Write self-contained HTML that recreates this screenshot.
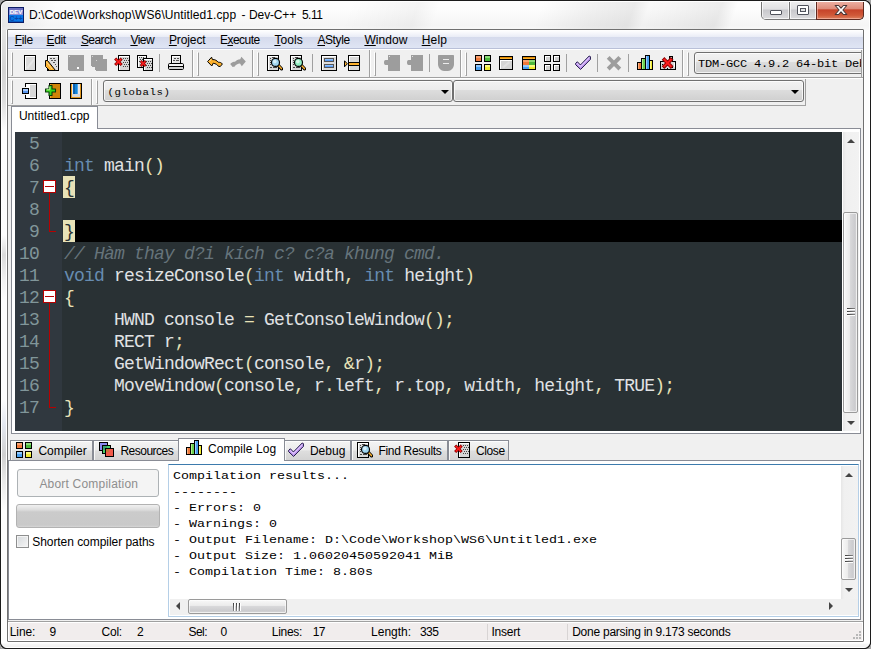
<!DOCTYPE html>
<html><head><meta charset="utf-8"><title>Dev-C++ 5.11</title>
<style>*{box-sizing:border-box}
html,body{margin:0;padding:0}
body{width:871px;height:649px;overflow:hidden;background:#a4a4a4;font-family:"Liberation Sans",sans-serif;font-size:12px;color:#000;position:relative}
.a{position:absolute}
svg{display:block}
.win{left:0;top:0;width:871px;height:649px;border-radius:6px;background:#f4f4f4;overflow:hidden}
.winborder{left:0;top:0;width:871px;height:649px;pointer-events:none}
.titlebg{left:0;top:0;width:871px;height:30px;background:linear-gradient(115deg,rgba(0,0,0,.09) 0,rgba(0,0,0,.04) 25px,transparent 55px),linear-gradient(110deg,transparent 510px,rgba(0,0,0,.05) 560px,rgba(0,0,0,.08) 598px,rgba(0,0,0,.02) 612px,rgba(0,0,0,.03) 630px,rgba(0,0,0,.07) 680px,transparent 695px),linear-gradient(110deg,transparent 330px,rgba(0,0,0,.04) 395px,transparent 415px),linear-gradient(#fff 0,#fdfdfd 30%,#f5f5f5 85%,#f9f9f9 100%)}
.fl{left:0;top:30px;width:8px;height:619px;background:linear-gradient(90deg,#fff 0,#fff 2px,transparent 2px,transparent 6px,#fff 6px),linear-gradient(#e4e4e4 0,#d4d4d4 40px,#dedede 70px,#fcfcfc 100px,#fdfdfd 205px,#dcdcdc 225px,#f2f2f2 250px,#fdfdfd 270px,#fdfdfd 370px,#e4e8f0 395px,#d0d0d0 425px,#e8e8e8 450px,#fdfdfd 480px,#fdfdfd 100%)}
.fr{left:863px;top:30px;width:8px;height:619px;background:linear-gradient(90deg,#fff 0,#fff 2px,transparent 2px,transparent 6px,#fff 6px),linear-gradient(#fdfdfd 0,#fdfdfd 100%)}
.fb{left:0;top:641px;width:871px;height:8px;background:linear-gradient(#fff 0,#fff 2px,#f6f6f6 3px,#f0f0f0 6px,#fff 6px)}
.ui{font-family:"Liberation Sans",sans-serif;font-size:12px;line-height:14px;white-space:pre;color:#000}
.title{text-shadow:0 0 6px #fff}
.mono{font-family:"Liberation Mono",monospace;white-space:pre}
.capbtns{left:761px;top:0;width:103px;height:20px;border:1px solid #767676;border-top:none;border-radius:0 0 5px 5px;overflow:hidden;background:#ddd}
.cb{top:0;height:19px;border-right:1px solid #767676;background:linear-gradient(#f2f2f2 0,#e0e0e2 48%,#c8c8cc 52%,#dcdcde 100%);box-shadow:inset 0 0 0 1px rgba(255,255,255,.7)}
.cmin{left:0;width:28px}
.cmin i{position:absolute;left:8px;top:10px;width:12px;height:5px;border:1px solid #50535c;background:#fff;border-radius:1px}
.cmax{left:28px;width:27px}
.cmax i{position:absolute;left:7px;top:5px;width:12px;height:10px;border:1px solid #50535c;background:#fff;border-radius:1px}
.cmax i:after{content:"";position:absolute;left:2px;top:2px;width:6px;height:4px;box-sizing:border-box;border:1px solid #50535c;background:#e4e4e4}
.cclose{left:55px;width:47px;border-right:none;background:linear-gradient(#f0b8ac 0,#de8c7a 46%,#c6432a 52%,#d05838 80%,#de8260 100%);box-shadow:inset 0 0 0 1px rgba(255,200,190,.55)}
.cclose svg{position:absolute;left:17px;top:4px}
.client{left:8px;top:30px;width:855px;height:611px;background:#f0f0f0}
.menubar{left:8px;top:30px;width:855px;height:19px;background:linear-gradient(#ffffff 0,#fdfdfe 1px,#e9ecf6 7px,#d5daec 7px,#dfe5f4 18px,#b9c0d8 18px,#b9c0d8 19px)}
.mi{top:33px;height:14px}
.mi u{text-decoration:underline;text-underline-offset:1px}
.grip{width:2px;border-top:1px solid #fff;border-left:1px solid #fff;border-right:1px solid #a0a0a0;border-bottom:1px solid #a0a0a0}
.vsep{width:1px;background:#a0a0a0}
.bandend{width:2px;border-left:1px solid #a0a0a0;border-right:1px solid #fff}
.combo{border:1px solid #707070;border-radius:3px;background:linear-gradient(#f2f2f2 0,#ebebeb 45%,#dddddd 46%,#cfcfcf 100%);box-shadow:inset 0 0 0 1px rgba(255,255,255,.75)}
.cbtxt{font-size:12px;line-height:14px;letter-spacing:-0.2px;color:#000;transform:scaleY(0.87);transform-origin:0 11px}
.arrow{width:0;height:0;border-left:4px solid transparent;border-right:4px solid transparent;border-top:4px solid #000}
.editor{left:15px;top:132px;width:827px;height:299px;background:#293134;overflow:hidden}
.gutter{left:0;top:0;width:47px;height:299px;background:#30383f}
.ln{left:0;width:24px;text-align:right;color:#81969a;height:22px;line-height:22px;font-size:18px;letter-spacing:-0.8px}
.cl{left:49px;height:22px;line-height:22px;font-size:18px;letter-spacing:-0.8px;color:#e0e2e4}
.k{color:#678cb1}.s{color:#e8e2b7}.c{color:#66747b;font-style:italic}.hb{color:#293134}
.tab{border:1px solid #898c95;border-bottom:none;background:linear-gradient(#f4f4f4 0,#ebebeb 9px,#dedede 10px,#d3d3d3 100%);height:20px;top:440px;box-shadow:inset 1px 1px 0 rgba(255,255,255,.8)}
.tabtxt{top:444px}
.sb{background:#f0f0f0}
.thumb{border:1px solid #9a9a9a;border-radius:2px;background:linear-gradient(90deg,#f8f8f8 0,#ececec 42%,#d8d8da 50%,#cbcbce 85%,#dedede 100%);box-shadow:inset 0 0 0 1px rgba(255,255,255,.6)}
.sbv{background:linear-gradient(90deg,#e6e6e6 0,#f0f0f0 3px,#f2f2f2 100%)}
.thumbh{border:1px solid #9a9a9a;border-radius:2px;background:linear-gradient(#f8f8f8 0,#ececec 42%,#d8d8da 50%,#cbcbce 85%,#dedede 100%);box-shadow:inset 0 0 0 1px rgba(255,255,255,.6)}
.gl{width:8px;height:8px;background:linear-gradient(90deg,rgba(60,60,60,1),rgba(120,120,120,.85)) 0 0/8px 1px no-repeat,linear-gradient(#fff,#fff) 0 1px/8px 1px no-repeat,linear-gradient(90deg,rgba(60,60,60,1),rgba(120,120,120,.85)) 0 3px/8px 1px no-repeat,linear-gradient(#fff,#fff) 0 4px/8px 1px no-repeat,linear-gradient(90deg,rgba(60,60,60,1),rgba(120,120,120,.85)) 0 6px/8px 1px no-repeat,linear-gradient(#fff,#fff) 0 7px/8px 1px no-repeat}
.glh{width:8px;height:8px;background:linear-gradient(rgba(60,60,60,1),rgba(120,120,120,.85)) 0 0/1px 8px no-repeat,linear-gradient(#fff,#fff) 1px 0/1px 8px no-repeat,linear-gradient(rgba(60,60,60,1),rgba(120,120,120,.85)) 3px 0/1px 8px no-repeat,linear-gradient(#fff,#fff) 4px 0/1px 8px no-repeat,linear-gradient(rgba(60,60,60,1),rgba(120,120,120,.85)) 6px 0/1px 8px no-repeat,linear-gradient(#fff,#fff) 7px 0/1px 8px no-repeat}
.au{width:0;height:0;border-left:4px solid transparent;border-right:4px solid transparent;border-bottom:4px solid #444}
.ad{width:0;height:0;border-left:4px solid transparent;border-right:4px solid transparent;border-top:4px solid #444}
.al{width:0;height:0;border-top:4px solid transparent;border-bottom:4px solid transparent;border-right:4px solid #444}
.ar{width:0;height:0;border-top:4px solid transparent;border-bottom:4px solid transparent;border-left:4px solid #444}
.log{font-size:13.33px;line-height:16px;color:#000;left:173px;transform:scaleY(0.87);transform-origin:0 12px}
.chk{width:13px;height:13px;border:1px solid #8e8f8f;background:linear-gradient(135deg,#d5d9dc,#f6f6f6);box-shadow:inset 0 0 0 1px #f4f4f4}
.st{top:625px;height:14px}
.szgrip{width:9px;height:9px;background:
 linear-gradient(#b8b8b8,#b8b8b8) 6px 0/2px 2px no-repeat,
 linear-gradient(#b8b8b8,#b8b8b8) 3px 3px/2px 2px no-repeat,
 linear-gradient(#b8b8b8,#b8b8b8) 6px 3px/2px 2px no-repeat,
 linear-gradient(#b8b8b8,#b8b8b8) 0 6px/2px 2px no-repeat,
 linear-gradient(#b8b8b8,#b8b8b8) 3px 6px/2px 2px no-repeat,
 linear-gradient(#b8b8b8,#b8b8b8) 6px 6px/2px 2px no-repeat}
</style></head>
<body>
<div class="a win">
<div class="a titlebg"></div>
<div class="a fl"></div><div class="a fr"></div><div class="a fb"></div>
<div class="a" style="left:8px;top:7px;width:16px;height:16px"><svg width="16" height="16" viewBox="0 0 16 16" shape-rendering="crispEdges"><rect x="0" y="0" width="16" height="16" fill="#0c1c66"/><rect x="1" y="1" width="14" height="7" fill="#8d8fd6"/><rect x="1" y="1" width="14" height="2" fill="#6d6fc0"/><rect x="1" y="8" width="14" height="7" fill="#0a78e8"/><rect x="1" y="14" width="14" height="1" fill="#0a5cc0"/><text x="8" y="7.3" font-family="Liberation Sans, sans-serif" font-weight="bold" font-size="6.2" fill="#fff" text-anchor="middle" shape-rendering="auto">DEV</text><text x="8" y="13.6" font-family="Liberation Sans, sans-serif" font-weight="bold" font-size="7" fill="#0b48a8" text-anchor="middle" shape-rendering="auto">C++</text></svg></div>
<div class="a ui title" style="left:0;top:8px;width:400px;height:14px"><span class="a" style="left:28.9px;top:0;letter-spacing:0.1px;">D:\Code\Workshop\WS6\Untitled1.cpp </span><span class="a" style="left:241.5px;top:0;letter-spacing:0.0px;">- </span><span class="a" style="left:249.1px;top:0;letter-spacing:-0.15px;">Dev-C++ </span><span class="a" style="left:301.9px;top:0;letter-spacing:-0.5px;">5.11</span></div>
<div class="a capbtns"><div class="a cb cmin"><i></i></div><div class="a cb cmax"><i></i></div><div class="a cb cclose"><svg width="14" height="12" viewBox="0 0 14 12"><path d="M1.2 1.5 L4.6 1.5 L7 4.2 L9.4 1.5 L12.8 1.5 L8.9 6 L12.8 10.5 L9.4 10.5 L7 7.8 L4.6 10.5 L1.2 10.5 L5.1 6 Z" fill="#fff" stroke="#4a3838" stroke-width="1.1" stroke-linejoin="round"/></svg></div></div>
<div class="a" style="left:816px;top:1px;width:48px;height:19px;border:1px solid #5e2a20;border-top:none;border-radius:0 0 5px 0;pointer-events:none"></div>
<div class="a client"></div>
<div class="a menubar"></div>
<div class="a ui mi" style="left:14.8px;top:33px;letter-spacing:-0.35px;"><u>F</u>ile</div><div class="a ui mi" style="left:46.5px;top:33px;letter-spacing:-0.35px;"><u>E</u>dit</div><div class="a ui mi" style="left:80.9px;top:33px;letter-spacing:-0.55px;"><u>S</u>earch</div><div class="a ui mi" style="left:130.4px;top:33px;letter-spacing:-0.5px;"><u>V</u>iew</div><div class="a ui mi" style="left:168.9px;top:33px;letter-spacing:-0.1px;"><u>P</u>roject</div><div class="a ui mi" style="left:219.9px;top:33px;letter-spacing:-0.5px;">E<u>x</u>ecute</div><div class="a ui mi" style="left:274.4px;top:33px;letter-spacing:0.1px;"><u>T</u>ools</div><div class="a ui mi" style="left:317.4px;top:33px;letter-spacing:-0.4px;"><u>A</u>Style</div><div class="a ui mi" style="left:364.4px;top:33px;letter-spacing:0.05px;"><u>W</u>indow</div><div class="a ui mi" style="left:421.7px;top:33px;letter-spacing:0.2px;"><u>H</u>elp</div>
<div class="a" style="left:8px;top:49px;width:855px;height:1px;background:#fff"></div><div class="a" style="left:8px;top:77px;width:855px;height:1px;background:#a0a0a0"></div><div class="a" style="left:8px;top:78px;width:855px;height:1px;background:#fff"></div><div class="a" style="left:8px;top:105px;width:797px;height:1px;background:#a0a0a0"></div><div class="a grip" style="left:11px;top:52px;height:24px"></div><div class="a grip" style="left:197px;top:52px;height:24px"></div><div class="a grip" style="left:257px;top:52px;height:24px"></div><div class="a grip" style="left:374px;top:52px;height:24px"></div><div class="a grip" style="left:465px;top:52px;height:24px"></div><div class="a grip" style="left:687px;top:52px;height:24px"></div><div class="a bandend" style="left:192px;top:50px;height:27px"></div><div class="a bandend" style="left:252px;top:50px;height:27px"></div><div class="a bandend" style="left:369px;top:50px;height:27px"></div><div class="a bandend" style="left:460px;top:50px;height:27px"></div><div class="a bandend" style="left:682px;top:50px;height:27px"></div><div class="a" style="left:22px;top:55px;width:16px;height:16px"><svg width="16" height="16" viewBox="0 0 16 16" shape-rendering="crispEdges"><rect x="2" y="0" width="12" height="16" fill="#000"/><rect x="3" y="1" width="10" height="14" fill="#fff"/><rect x="4" y="2" width="9" height="13" fill="#dadada"/><path d="M4 13 L12 3 L12 6 L6 14 Z" fill="#e6e6e6" shape-rendering="auto"/></svg></div><div class="a" style="left:45px;top:55px;width:16px;height:16px"><svg width="16" height="16" viewBox="0 0 16 16" shape-rendering="crispEdges"><rect x="2" y="0" width="12" height="16" fill="#000"/><rect x="3" y="1" width="10" height="14" fill="#fff"/><rect x="4" y="2" width="9" height="13" fill="#dedede"/><rect x="5" y="3" width="2" height="1" fill="#555"/><rect x="8" y="3" width="2" height="1" fill="#555"/><rect x="6" y="5" width="2" height="1" fill="#555"/><rect x="9" y="5" width="2" height="1" fill="#555"/><rect x="8" y="7" width="2" height="1" fill="#555"/><rect x="10" y="9" width="1" height="1" fill="#555"/><rect x="11" y="11" width="1" height="1" fill="#555"/><path d="M0.5 5.5 L2.5 5.5 L10.5 15.5 L4.5 15.5 L0.5 11.5 Z" fill="#fbb02d" stroke="#000" stroke-width="1" shape-rendering="auto"/><path d="M1.5 7 L7 14" stroke="#ffd98a" stroke-width="1" shape-rendering="auto"/></svg></div><div class="a" style="left:68px;top:55px;width:16px;height:16px"><svg width="16" height="16" viewBox="0 0 16 16" shape-rendering="crispEdges"><path d="M0 0 H16 V16 H1 L0 15 Z" fill="#9d9d9d"/><rect x="9" y="12" width="2" height="2" fill="#fff"/><rect x="1" y="1" width="1" height="1" fill="#d4d4d4"/></svg></div><div class="a" style="left:91px;top:55px;width:16px;height:16px"><svg width="16" height="16" viewBox="0 0 16 16" shape-rendering="crispEdges"><path d="M0 0 H12 V4 H16 V16 H5 L4 15 V12 H1 L0 11 Z" fill="#9d9d9d"/><rect x="1" y="1" width="1" height="1" fill="#d4d4d4"/><rect x="5" y="5" width="1" height="1" fill="#d4d4d4"/></svg></div><div class="a" style="left:114px;top:55px;width:16px;height:16px"><svg width="16" height="16" viewBox="0 0 16 16" shape-rendering="crispEdges"><rect x="4" y="0" width="12" height="16" fill="#000"/><rect x="5" y="1" width="10" height="14" fill="#fff"/><rect x="6" y="2" width="9" height="13" fill="#d6d6d6"/><rect x="9" y="3" width="1" height="1" fill="#444"/><rect x="11" y="3" width="1" height="1" fill="#444"/><rect x="13" y="3" width="1" height="1" fill="#444"/><rect x="10" y="5" width="1" height="1" fill="#444"/><rect x="12" y="5" width="1" height="1" fill="#444"/><rect x="14" y="5" width="1" height="1" fill="#444"/><rect x="9" y="7" width="1" height="1" fill="#444"/><rect x="11" y="7" width="1" height="1" fill="#444"/><rect x="13" y="7" width="1" height="1" fill="#444"/><rect x="10" y="9" width="1" height="1" fill="#444"/><rect x="12" y="9" width="1" height="1" fill="#444"/><rect x="14" y="9" width="1" height="1" fill="#444"/><rect x="9" y="11" width="1" height="1" fill="#444"/><rect x="11" y="11" width="1" height="1" fill="#444"/><rect x="13" y="11" width="1" height="1" fill="#444"/><g shape-rendering="auto" stroke-linecap="square"><path d="M2.2 4.6L6.6000000000000005 9.0M6.6000000000000005 4.6L2.2 9.0" stroke="#8c0000" stroke-width="3.0"/><path d="M2.2 4.6L6.6000000000000005 9.0M6.6000000000000005 4.6L2.2 9.0" stroke="#ff1c1c" stroke-width="1.5"/></g></svg></div><div class="a" style="left:137px;top:55px;width:16px;height:16px"><svg width="16" height="16" viewBox="0 0 16 16" shape-rendering="crispEdges"><rect x="0" y="0" width="10" height="13" fill="#000"/><rect x="1" y="1" width="8" height="11" fill="#fff"/><rect x="2" y="2" width="7" height="10" fill="#d6d6d6"/><rect x="2" y="2" width="1" height="1" fill="#444"/><rect x="4" y="2" width="1" height="1" fill="#444"/><rect x="6" y="2" width="1" height="1" fill="#444"/><rect x="3" y="4" width="1" height="1" fill="#444"/><rect x="5" y="4" width="1" height="1" fill="#444"/><rect x="7" y="4" width="1" height="1" fill="#444"/><rect x="2" y="6" width="1" height="1" fill="#444"/><rect x="4" y="6" width="1" height="1" fill="#444"/><rect x="6" y="6" width="1" height="1" fill="#444"/><rect x="6" y="3" width="10" height="13" fill="#000"/><rect x="7" y="4" width="8" height="11" fill="#fff"/><rect x="8" y="5" width="7" height="10" fill="#d6d6d6"/><rect x="9" y="6" width="1" height="1" fill="#444"/><rect x="11" y="6" width="1" height="1" fill="#444"/><rect x="13" y="6" width="1" height="1" fill="#444"/><rect x="10" y="8" width="1" height="1" fill="#444"/><rect x="12" y="8" width="1" height="1" fill="#444"/><rect x="14" y="8" width="1" height="1" fill="#444"/><rect x="9" y="10" width="1" height="1" fill="#444"/><rect x="11" y="10" width="1" height="1" fill="#444"/><rect x="13" y="10" width="1" height="1" fill="#444"/><rect x="10" y="12" width="1" height="1" fill="#444"/><rect x="12" y="12" width="1" height="1" fill="#444"/><rect x="14" y="12" width="1" height="1" fill="#444"/><g shape-rendering="auto" stroke-linecap="square"><path d="M4.6 6.9L7.800000000000001 10.1M7.800000000000001 6.9L4.6 10.1" stroke="#8c0000" stroke-width="2.6"/><path d="M4.6 6.9L7.800000000000001 10.1M7.800000000000001 6.9L4.6 10.1" stroke="#ff1c1c" stroke-width="1.3"/></g></svg></div><div class="a" style="left:168px;top:55px;width:16px;height:16px"><svg width="16" height="16" viewBox="0 0 16 16" shape-rendering="crispEdges"><rect x="3" y="0" width="10" height="9" fill="#000"/><rect x="4" y="1" width="8" height="7" fill="#fff"/><rect x="5" y="2" width="7" height="6" fill="#e4e4e4"/><rect x="6" y="3" width="2" height="1" fill="#555"/><rect x="9" y="3" width="2" height="1" fill="#555"/><rect x="5" y="5" width="2" height="1" fill="#555"/><rect x="8" y="5" width="3" height="1" fill="#555"/><rect x="0.5" y="8.5" width="15" height="6" rx="1.2" fill="#f4f4f4" stroke="#000" shape-rendering="auto"/><rect x="1" y="11" width="14" height="1" fill="#000"/><rect x="1" y="12" width="14" height="2" fill="#d0d0d0"/></svg></div><div class="a" style="left:207px;top:55px;width:16px;height:16px"><svg width="16" height="16" viewBox="0 0 16 16"><path d="M0.6 6.6 L4.6 2.2 L5.4 4.6 C8 4.2 10 5.8 11.2 7.2 C12.6 7.2 14.6 7.6 15.4 9 L13.2 11.6 L11.2 11.2 C10.6 9.8 8.6 8.6 6.2 8.2 L4.8 11 Z" fill="#fbb02d" stroke="#000" stroke-width="1" stroke-linejoin="round"/><path d="M2.4 6.4 L4.4 4.2" stroke="#ffe0a0" stroke-width="1"/></svg></div><div class="a" style="left:230px;top:55px;width:16px;height:16px"><svg width="16" height="16" viewBox="0 0 16 16"><path d="M15.8 6.4 L11.4 1.8 L10.2 4.2 C8 4.2 6.4 5.2 5 6.8 C3.4 6.8 1.4 7.4 0.2 9 L2.6 12 L4.8 11.4 C5.6 10 7.6 8.8 10 8.6 L11.8 11.2 Z" fill="#9d9d9d"/></svg></div><div class="a" style="left:267px;top:55px;width:16px;height:16px"><svg width="16" height="16" viewBox="0 0 16 16" shape-rendering="crispEdges"><rect x="0" y="0" width="12" height="16" fill="#000"/><rect x="1" y="1" width="10" height="14" fill="#fff"/><rect x="2" y="2" width="9" height="13" fill="#d8d8d8"/><rect x="3" y="3" width="1" height="1" fill="#444"/><rect x="3" y="5" width="1" height="1" fill="#444"/><rect x="3" y="7" width="1" height="1" fill="#444"/><rect x="3" y="9" width="1" height="1" fill="#444"/><rect x="3" y="12" width="2" height="1" fill="#444"/><rect x="6" y="12" width="4" height="1" fill="#444"/><rect x="5" y="2" width="3" height="1" fill="#444"/><g shape-rendering="auto"><path d="M11.3 10.3 L14.6 13.8" stroke="#000" stroke-width="3.2" stroke-linecap="round"/><path d="M11.6 10.6 L14.4 13.6" stroke="#fbb02d" stroke-width="1.5" stroke-linecap="round"/><circle cx="8.5" cy="7.4" r="4" fill="#9fd4ee" stroke="#000" stroke-width="1.2"/><circle cx="7.8" cy="6.6" r="1.8" fill="#d8f0fa"/></g></svg></div><div class="a" style="left:290px;top:55px;width:16px;height:16px"><svg width="16" height="16" viewBox="0 0 16 16" shape-rendering="crispEdges"><rect x="0" y="0" width="12" height="16" fill="#000"/><rect x="1" y="1" width="10" height="14" fill="#fff"/><rect x="2" y="2" width="9" height="13" fill="#d8d8d8"/><rect x="3" y="3" width="1" height="1" fill="#444"/><rect x="3" y="5" width="1" height="1" fill="#444"/><rect x="3" y="7" width="1" height="1" fill="#444"/><rect x="3" y="9" width="1" height="1" fill="#444"/><rect x="3" y="12" width="2" height="1" fill="#444"/><rect x="6" y="12" width="4" height="1" fill="#444"/><rect x="5" y="2" width="3" height="1" fill="#444"/><g shape-rendering="auto"><path d="M11.3 10.3 L14.6 13.8" stroke="#000" stroke-width="3.2" stroke-linecap="round"/><path d="M11.6 10.6 L14.4 13.6" stroke="#fbb02d" stroke-width="1.5" stroke-linecap="round"/><circle cx="8.5" cy="7.4" r="4" fill="#90ecc0" stroke="#000" stroke-width="1.2"/><circle cx="7.8" cy="6.6" r="1.8" fill="#d4f8e6"/></g></svg></div><div class="a" style="left:321px;top:55px;width:16px;height:16px"><svg width="16" height="16" viewBox="0 0 16 16" shape-rendering="crispEdges"><rect x="0" y="0" width="16" height="16" fill="#000"/><rect x="1" y="1" width="14" height="14" fill="#fff"/><rect x="2" y="2" width="13" height="13" fill="#dcdcdc"/><rect x="3" y="3" width="10" height="4" fill="#555"/><rect x="4" y="4" width="8" height="2" fill="#5a9cf4"/><rect x="4" y="4" width="8" height="1" fill="#8cc0ff"/><rect x="3" y="9" width="10" height="4" fill="#555"/><rect x="4" y="10" width="8" height="2" fill="#5a9cf4"/><rect x="4" y="10" width="8" height="1" fill="#8cc0ff"/></svg></div><div class="a" style="left:344px;top:55px;width:16px;height:16px"><svg width="16" height="16" viewBox="0 0 16 16" shape-rendering="crispEdges"><rect x="4" y="0" width="12" height="16" fill="#000"/><rect x="5" y="1" width="10" height="14" fill="#fff"/><rect x="6" y="2" width="9" height="13" fill="#d8d8d8"/><rect x="5" y="7" width="10" height="4" fill="#000"/><rect x="5" y="8" width="10" height="2" fill="#fbb02d"/><path d="M0.5 5.8 L3.4 8.8 L0.5 11.8 Z" fill="#fbb02d" stroke="#000" stroke-width="1" shape-rendering="auto"/></svg></div><div class="a" style="left:384px;top:55px;width:16px;height:16px"><svg width="16" height="16" viewBox="0 0 16 16" shape-rendering="crispEdges"><path d="M4 0 H16 V16 H4 V10 H1.5 C0.5 10 0 9 0 7.5 C0 6 0.5 5 1.5 5 H4 Z" fill="#9d9d9d" shape-rendering="auto"/><rect x="5" y="1" width="1" height="1" fill="#e0e0e0"/></svg></div><div class="a" style="left:407px;top:55px;width:16px;height:16px"><svg width="16" height="16" viewBox="0 0 16 16" shape-rendering="crispEdges"><path d="M4 0 H16 V16 H4 V10 H1.5 C0.5 10 0 9 0 7.5 C0 6 0.5 5 1.5 5 H4 Z" fill="#9d9d9d" shape-rendering="auto"/><rect x="5" y="1" width="1" height="1" fill="#e0e0e0"/></svg></div><div class="a" style="left:438px;top:55px;width:16px;height:16px"><svg width="16" height="16" viewBox="0 0 16 16" shape-rendering="crispEdges"><path d="M0 1 C0 0.4 0.4 0 1 0 H15 C15.6 0 16 0.4 16 1 V9 C16 13 13 16 10 16 H6 C3 16 0 13 0 9 Z" fill="#9d9d9d" shape-rendering="auto"/><rect x="5" y="4" width="6" height="1" fill="#ececec"/><rect x="5" y="8" width="6" height="1" fill="#ececec"/></svg></div><div class="a" style="left:475px;top:55px;width:16px;height:16px"><svg width="16" height="16" viewBox="0 0 16 16" shape-rendering="crispEdges"><rect x="0" y="0" width="7" height="7" fill="#000"/><rect x="1" y="1" width="5" height="5" fill="#f0793a"/><rect x="1" y="1" width="5" height="2" fill="#f8a070"/><rect x="9" y="0" width="7" height="7" fill="#000"/><rect x="10" y="1" width="5" height="5" fill="#4cb83c"/><rect x="10" y="1" width="5" height="2" fill="#8cdc78"/><rect x="0" y="9" width="7" height="7" fill="#000"/><rect x="1" y="10" width="5" height="5" fill="#4aa0f0"/><rect x="1" y="10" width="5" height="2" fill="#90c8ff"/><rect x="9" y="9" width="7" height="7" fill="#000"/><rect x="10" y="10" width="5" height="5" fill="#f0ea30"/><rect x="10" y="10" width="5" height="2" fill="#fafa80"/></svg></div><div class="a" style="left:498px;top:55px;width:16px;height:16px"><svg width="16" height="16" viewBox="0 0 16 16" shape-rendering="crispEdges"><rect x="1" y="1" width="14" height="14" fill="#000"/><rect x="2" y="2" width="12" height="2" fill="#fbb02d"/><rect x="2" y="2" width="12" height="1" fill="#e08a00"/><rect x="2" y="5" width="12" height="9" fill="#fff"/><rect x="3" y="6" width="11" height="8" fill="#d4d4d4"/><path d="M4 12 L11 6 L12 8 L6 13 Z" fill="#e0e0e0" shape-rendering="auto"/></svg></div><div class="a" style="left:521px;top:55px;width:16px;height:16px"><svg width="16" height="16" viewBox="0 0 16 16" shape-rendering="crispEdges"><rect x="1" y="1" width="14" height="14" fill="#000"/><rect x="2" y="2" width="12" height="2" fill="#fbb02d"/><rect x="2" y="2" width="12" height="1" fill="#e08a00"/><rect x="2" y="5" width="6" height="5" fill="#f0793a"/><rect x="2" y="5" width="6" height="2" fill="#f8a070"/><rect x="8" y="5" width="6" height="5" fill="#4cb83c"/><rect x="8" y="5" width="6" height="2" fill="#8cdc78"/><rect x="2" y="10" width="6" height="4" fill="#4aa0f0"/><rect x="2" y="10" width="6" height="2" fill="#90c8ff"/><rect x="8" y="10" width="6" height="4" fill="#f0ea30"/><rect x="8" y="10" width="6" height="2" fill="#fafa80"/></svg></div><div class="a" style="left:544px;top:55px;width:16px;height:16px"><svg width="16" height="16" viewBox="0 0 16 16" shape-rendering="crispEdges"><rect x="0" y="0" width="7" height="7" fill="#000"/><rect x="1" y="1" width="5" height="5" fill="#fff"/><rect x="2" y="2" width="4" height="4" fill="#d0d0d0"/><rect x="9" y="0" width="7" height="7" fill="#000"/><rect x="10" y="1" width="5" height="5" fill="#fff"/><rect x="11" y="2" width="4" height="4" fill="#d0d0d0"/><rect x="0" y="9" width="7" height="7" fill="#000"/><rect x="1" y="10" width="5" height="5" fill="#fff"/><rect x="2" y="11" width="4" height="4" fill="#d0d0d0"/><rect x="9" y="9" width="7" height="7" fill="#000"/><rect x="10" y="10" width="5" height="5" fill="#fff"/><rect x="11" y="11" width="4" height="4" fill="#d0d0d0"/></svg></div><div class="a" style="left:575px;top:55px;width:16px;height:16px"><svg width="16" height="16" viewBox="0 0 16 16"><path d="M0.6 8.4 L2.4 6.8 L5.4 10 L14.2 1 L15.4 1.6 L15.4 4.4 L5.6 14.4 L0.6 9.6 Z" fill="#c9a2f6" stroke="#1c1446" stroke-width="1" stroke-linejoin="round"/><path d="M2.4 8.2 L5.4 11.4 L14.4 2.4" stroke="#e6d2ff" stroke-width="1" fill="none"/></svg></div><div class="a" style="left:606px;top:55px;width:16px;height:16px"><svg width="16" height="16" viewBox="0 0 16 16"><path d="M3.6 3.8 L12.4 12.6 M12.4 3.8 L3.6 12.6" stroke="#9d9d9d" stroke-width="4" stroke-linecap="square"/></svg></div><div class="a" style="left:637px;top:55px;width:16px;height:16px"><svg width="16" height="16" viewBox="0 0 16 16" shape-rendering="crispEdges"><rect x="0" y="7" width="5" height="8" fill="#000"/><rect x="1" y="8" width="3" height="6" fill="#f0793a"/><rect x="1" y="8" width="1" height="6" fill="#f8b080"/><rect x="4" y="3" width="5" height="12" fill="#000"/><rect x="5" y="4" width="3" height="10" fill="#6cd050"/><rect x="5" y="4" width="1" height="10" fill="#b0f090"/><rect x="8" y="0" width="5" height="15" fill="#000"/><rect x="9" y="1" width="3" height="13" fill="#4aa0f0"/><rect x="9" y="1" width="1" height="13" fill="#a0d0ff"/><rect x="12" y="5" width="4" height="10" fill="#000"/><rect x="13" y="6" width="2" height="8" fill="#f0ea30"/><rect x="13" y="6" width="1" height="8" fill="#fafa90"/></svg></div><div class="a" style="left:660px;top:55px;width:16px;height:16px"><svg width="16" height="16" viewBox="0 0 16 16" shape-rendering="crispEdges"><rect x="0" y="6" width="16" height="9" fill="#000"/><rect x="1" y="7" width="14" height="7" fill="#d8d8d8"/><rect x="9" y="1" width="4" height="6" fill="#000"/><rect x="10" y="2" width="2" height="5" fill="#d8d8d8"/><rect x="2" y="9" width="1" height="1" fill="#000"/><rect x="4" y="12" width="1" height="1" fill="#000"/><rect x="7" y="13" width="1" height="1" fill="#000"/><rect x="12" y="12" width="1" height="1" fill="#000"/><rect x="14" y="8" width="1" height="4" fill="#fff"/><g shape-rendering="auto" stroke-linecap="square"><path d="M4.3999999999999995 4.8L10.8 11.2M10.8 4.8L4.3999999999999995 11.2" stroke="#8c0000" stroke-width="3.8"/><path d="M4.3999999999999995 4.8L10.8 11.2M10.8 4.8L4.3999999999999995 11.2" stroke="#ff1c1c" stroke-width="2.0"/></g></svg></div><div class="a vsep" style="left:159px;top:54px;height:18px"></div><div class="a vsep" style="left:312px;top:54px;height:18px"></div><div class="a vsep" style="left:429px;top:54px;height:18px"></div><div class="a vsep" style="left:566px;top:54px;height:18px"></div><div class="a vsep" style="left:597px;top:54px;height:18px"></div><div class="a vsep" style="left:628px;top:54px;height:18px"></div>
<div class="a" style="left:694px;top:50px;width:167px;height:27px;overflow:hidden"><div class="a combo" style="left:0;top:2px;width:180px;height:22px"></div></div><div class="a mono cbtxt" style="left:698px;top:57px;width:163px;overflow:hidden">TDM-GCC 4.9.2 64-bit Debug</div><div class="a" style="left:861px;top:50px;width:1px;height:27px;background:#a0a0a0"></div><div class="a" style="left:862px;top:50px;width:1px;height:27px;background:#f0f0f0"></div>
<div class="a grip" style="left:11px;top:80px;height:24px"></div><div class="a grip" style="left:96px;top:80px;height:24px"></div><div class="a bandend" style="left:91px;top:79px;height:26px"></div><div class="a" style="left:22px;top:83px;width:16px;height:16px"><svg width="16" height="16" viewBox="0 0 16 16" shape-rendering="crispEdges"><path d="M3 0 H15 V16 H3 V12 H6 V4 H3 Z" fill="#000"/><rect x="4" y="1" width="10" height="14" fill="#fff"/><rect x="8" y="2" width="6" height="12" fill="#d8d8d8"/><rect x="4" y="4" width="3" height="8" fill="#fff"/><rect x="3" y="4" width="1" height="8" fill="#f0f0f0"/><rect x="0" y="5" width="7" height="6" fill="#000"/><rect x="1" y="6" width="5" height="4" fill="#5a96ec"/><rect x="1" y="6" width="5" height="2" fill="#a8ccff"/></svg></div><div class="a" style="left:45px;top:83px;width:16px;height:16px"><svg width="16" height="16" viewBox="0 0 16 16" shape-rendering="crispEdges"><rect x="4" y="0" width="12" height="16" fill="#000"/><rect x="5" y="1" width="10" height="14" fill="#d08408"/><rect x="5" y="1" width="1" height="14" fill="#e8a838"/><g shape-rendering="auto"><path d="M4 2.5 H7 V6 H10.5 V9 H7 V12.5 H4 V9 H0.5 V6 H4 Z" fill="#35d818" stroke="#0a3c0a" stroke-width="1.1" stroke-linejoin="round"/><path d="M4.8 3.6 V6.8 H1.6" stroke="#c8ffa8" stroke-width="1" fill="none"/></g></svg></div><div class="a" style="left:68px;top:83px;width:16px;height:16px"><svg width="16" height="16" viewBox="0 0 16 16" shape-rendering="crispEdges"><rect x="2" y="0" width="12" height="16" fill="#000"/><rect x="3" y="1" width="10" height="14" fill="#e09820"/><rect x="4" y="1" width="8" height="13" fill="#e8e8e8"/><rect x="5" y="1" width="5" height="10" fill="#1684d8"/><rect x="5" y="1" width="2" height="10" fill="#0a62b0"/><rect x="9" y="1" width="1" height="10" fill="#4aa8f0"/><rect x="4" y="11" width="8" height="3" fill="#d8d8d8"/></svg></div><div class="a combo" style="left:103px;top:80px;width:350px;height:22px"></div><div class="a combo" style="left:453px;top:80px;width:351px;height:22px"></div><div class="a arrow" style="left:440.5px;top:90px"></div><div class="a arrow" style="left:790.5px;top:90px"></div><div class="a mono cbtxt" style="left:107.5px;top:85px;font-size:10.67px;letter-spacing:0.6px;transform:scaleY(0.88)">(globals)</div><div class="a" style="left:805px;top:79px;width:1px;height:27px;background:#a0a0a0"></div>
<div class="a" style="left:11px;top:128px;width:850px;height:306px;border:1px solid #898c95;background:#fff"></div><div class="a" style="left:11px;top:106px;width:87px;height:23px;border:1px solid #898c95;border-bottom:none;background:#fff"></div><div class="a ui " style="left:18.9px;top:109px;letter-spacing:0.05px;">Untitled1.cpp</div>
<div class="a editor"><div class="a gutter"></div><div class="a" style="left:48px;top:88px;width:779px;height:22px;background:#000"></div><div class="a" style="left:48px;top:44px;width:12px;height:22px;background:#e8e2b7"></div><div class="a" style="left:48px;top:88px;width:12px;height:22px;background:#e8e2b7"></div><div class="a mono ln" style="top:1px">5</div><div class="a mono ln" style="top:23px">6</div><div class="a mono cl" style="top:23px"><span class="k">int</span> main<span class="s">()</span></div><div class="a mono ln" style="top:45px">7</div><div class="a mono cl" style="top:45px"><span class="hb">{</span></div><div class="a mono ln" style="top:67px">8</div><div class="a mono ln" style="top:89px">9</div><div class="a mono cl" style="top:89px"><span class="hb">}</span></div><div class="a mono ln" style="top:111px">10</div><div class="a mono cl" style="top:111px"><span class="c">// Hàm thay d?i kích c? c?a khung cmd.</span></div><div class="a mono ln" style="top:133px">11</div><div class="a mono cl" style="top:133px"><span class="k">void</span> resizeConsole<span class="s">(</span><span class="k">int</span> width<span class="s">,</span> <span class="k">int</span> height<span class="s">)</span></div><div class="a mono ln" style="top:155px">12</div><div class="a mono cl" style="top:155px"><span class="s">{</span></div><div class="a mono ln" style="top:177px">13</div><div class="a mono cl" style="top:177px">     HWND console <span class="s">=</span> GetConsoleWindow<span class="s">();</span></div><div class="a mono ln" style="top:199px">14</div><div class="a mono cl" style="top:199px">     RECT r<span class="s">;</span></div><div class="a mono ln" style="top:221px">15</div><div class="a mono cl" style="top:221px">     GetWindowRect<span class="s">(</span>console<span class="s">,</span> <span class="s">&amp;</span>r<span class="s">);</span></div><div class="a mono ln" style="top:243px">16</div><div class="a mono cl" style="top:243px">     MoveWindow<span class="s">(</span>console<span class="s">,</span> r<span class="s">.</span>left<span class="s">,</span> r<span class="s">.</span>top<span class="s">,</span> width<span class="s">,</span> height<span class="s">,</span> TRUE<span class="s">);</span></div><div class="a mono ln" style="top:265px">17</div><div class="a mono cl" style="top:265px"><span class="s">}</span></div><div class="a" style="left:34px;top:55px;width:1px;height:44px;background:#b80000"></div><div class="a" style="left:34px;top:99px;width:7px;height:1px;background:#b80000"></div><div class="a" style="left:28px;top:48px;width:13px;height:13px;border:1px solid #b80000;background:#fff"><div class="a" style="left:1px;top:5px;width:9px;height:1px;background:#b80000"></div></div><div class="a" style="left:34px;top:165px;width:1px;height:110px;background:#b80000"></div><div class="a" style="left:34px;top:275px;width:7px;height:1px;background:#b80000"></div><div class="a" style="left:28px;top:158px;width:13px;height:13px;border:1px solid #b80000;background:#fff"><div class="a" style="left:1px;top:5px;width:9px;height:1px;background:#b80000"></div></div></div>
<div class="a sb sbv" style="left:843px;top:132px;width:16px;height:299px"></div><div class="a thumb" style="left:843px;top:212px;width:15px;height:201px"></div><div class="a gl" style="left:847px;top:308px"></div><div class="a au" style="left:847px;top:139px"></div><div class="a ad" style="left:847px;top:421px"></div>
<div class="a" style="left:8px;top:460px;width:853px;height:160px;border:1px solid #898c95;background:#fff"></div><div class="a tab" style="left:10px;width:83px"></div><div class="a" style="left:16px;top:442px;width:16px;height:16px"><svg width="16" height="16" viewBox="0 0 16 16" shape-rendering="crispEdges"><rect x="0" y="0" width="7" height="7" fill="#000"/><rect x="1" y="1" width="5" height="5" fill="#f0793a"/><rect x="1" y="1" width="5" height="2" fill="#f8a070"/><rect x="9" y="0" width="7" height="7" fill="#000"/><rect x="10" y="1" width="5" height="5" fill="#4cb83c"/><rect x="10" y="1" width="5" height="2" fill="#8cdc78"/><rect x="0" y="9" width="7" height="7" fill="#000"/><rect x="1" y="10" width="5" height="5" fill="#4aa0f0"/><rect x="1" y="10" width="5" height="2" fill="#90c8ff"/><rect x="9" y="9" width="7" height="7" fill="#000"/><rect x="10" y="10" width="5" height="5" fill="#f0ea30"/><rect x="10" y="10" width="5" height="2" fill="#fafa80"/></svg></div><div class="a ui " style="left:38.4px;top:444px;letter-spacing:0.05px;">Compiler</div><div class="a tab" style="left:93px;width:86px"></div><div class="a" style="left:99px;top:442px;width:16px;height:16px"><svg width="16" height="16" viewBox="0 0 16 16" shape-rendering="crispEdges"><rect x="0" y="0" width="9" height="9" fill="#000"/><rect x="1" y="1" width="7" height="7" fill="#8a88f0"/><rect x="3" y="3" width="9" height="9" fill="#000"/><rect x="4" y="4" width="7" height="7" fill="#48d068"/><rect x="4" y="4" width="4" height="4" fill="#3aa070"/><rect x="6" y="6" width="9" height="9" fill="#000"/><rect x="7" y="7" width="7" height="7" fill="#f05a4a"/><rect x="7" y="7" width="3" height="3" fill="#c87838"/></svg></div><div class="a ui " style="left:120.4px;top:444px;letter-spacing:-0.5px;">Resources</div><div class="a tab" style="left:284px;width:67px"></div><div class="a" style="left:288px;top:442px;width:16px;height:16px"><svg width="16" height="16" viewBox="0 0 16 16"><path d="M0.6 8.4 L2.4 6.8 L5.4 10 L14.2 1 L15.4 1.6 L15.4 4.4 L5.6 14.4 L0.6 9.6 Z" fill="#c9a2f6" stroke="#1c1446" stroke-width="1" stroke-linejoin="round"/><path d="M2.4 8.2 L5.4 11.4 L14.4 2.4" stroke="#e6d2ff" stroke-width="1" fill="none"/></svg></div><div class="a ui " style="left:309.9px;top:444px;letter-spacing:0.05px;">Debug</div><div class="a tab" style="left:351px;width:97px"></div><div class="a" style="left:357px;top:442px;width:16px;height:16px"><svg width="16" height="16" viewBox="0 0 16 16" shape-rendering="crispEdges"><rect x="0" y="0" width="12" height="16" fill="#000"/><rect x="1" y="1" width="10" height="14" fill="#fff"/><rect x="2" y="2" width="9" height="13" fill="#d8d8d8"/><rect x="3" y="3" width="1" height="1" fill="#444"/><rect x="3" y="5" width="1" height="1" fill="#444"/><rect x="3" y="7" width="1" height="1" fill="#444"/><rect x="3" y="9" width="1" height="1" fill="#444"/><rect x="3" y="12" width="2" height="1" fill="#444"/><rect x="6" y="12" width="4" height="1" fill="#444"/><rect x="5" y="2" width="3" height="1" fill="#444"/><g shape-rendering="auto"><path d="M11.3 10.3 L14.6 13.8" stroke="#000" stroke-width="3.2" stroke-linecap="round"/><path d="M11.6 10.6 L14.4 13.6" stroke="#fbb02d" stroke-width="1.5" stroke-linecap="round"/><circle cx="8.5" cy="7.4" r="4" fill="#9fd4ee" stroke="#000" stroke-width="1.2"/><circle cx="7.8" cy="6.6" r="1.8" fill="#d8f0fa"/></g></svg></div><div class="a ui " style="left:378.4px;top:444px;letter-spacing:-0.3px;">Find Results</div><div class="a tab" style="left:448px;width:61px"></div><div class="a" style="left:454px;top:442px;width:16px;height:16px"><svg width="16" height="16" viewBox="0 0 16 16" shape-rendering="crispEdges"><rect x="4" y="0" width="12" height="16" fill="#000"/><rect x="5" y="1" width="10" height="14" fill="#fff"/><rect x="6" y="2" width="9" height="13" fill="#d6d6d6"/><rect x="9" y="3" width="1" height="1" fill="#444"/><rect x="11" y="3" width="1" height="1" fill="#444"/><rect x="13" y="3" width="1" height="1" fill="#444"/><rect x="10" y="5" width="1" height="1" fill="#444"/><rect x="12" y="5" width="1" height="1" fill="#444"/><rect x="14" y="5" width="1" height="1" fill="#444"/><rect x="9" y="7" width="1" height="1" fill="#444"/><rect x="11" y="7" width="1" height="1" fill="#444"/><rect x="13" y="7" width="1" height="1" fill="#444"/><rect x="10" y="9" width="1" height="1" fill="#444"/><rect x="12" y="9" width="1" height="1" fill="#444"/><rect x="14" y="9" width="1" height="1" fill="#444"/><rect x="9" y="11" width="1" height="1" fill="#444"/><rect x="11" y="11" width="1" height="1" fill="#444"/><rect x="13" y="11" width="1" height="1" fill="#444"/><g shape-rendering="auto" stroke-linecap="square"><path d="M2.2 4.6L6.6000000000000005 9.0M6.6000000000000005 4.6L2.2 9.0" stroke="#8c0000" stroke-width="3.0"/><path d="M2.2 4.6L6.6000000000000005 9.0M6.6000000000000005 4.6L2.2 9.0" stroke="#ff1c1c" stroke-width="1.5"/></g></svg></div><div class="a ui " style="left:475.9px;top:444px;letter-spacing:-0.35px;">Close</div><div class="a" style="left:178px;top:438px;width:107px;height:23px;border:1px solid #898c95;border-bottom:none;background:#fff"></div><div class="a" style="left:186px;top:440px;width:16px;height:16px"><svg width="16" height="16" viewBox="0 0 16 16" shape-rendering="crispEdges"><rect x="0" y="7" width="5" height="8" fill="#000"/><rect x="1" y="8" width="3" height="6" fill="#f0793a"/><rect x="1" y="8" width="1" height="6" fill="#f8b080"/><rect x="4" y="3" width="5" height="12" fill="#000"/><rect x="5" y="4" width="3" height="10" fill="#6cd050"/><rect x="5" y="4" width="1" height="10" fill="#b0f090"/><rect x="8" y="0" width="5" height="15" fill="#000"/><rect x="9" y="1" width="3" height="13" fill="#4aa0f0"/><rect x="9" y="1" width="1" height="13" fill="#a0d0ff"/><rect x="12" y="5" width="4" height="10" fill="#000"/><rect x="13" y="6" width="2" height="8" fill="#f0ea30"/><rect x="13" y="6" width="1" height="8" fill="#fafa90"/></svg></div><div class="a ui " style="left:207.9px;top:442px;letter-spacing:0.1px;">Compile Log</div>
<div class="a" style="left:17px;top:469px;width:142px;height:28px;border:1px solid #adb2b5;border-radius:3px;background:#f4f4f4"></div><div class="a ui " style="left:39.4px;top:477px;letter-spacing:0.2px;color:#8e8e8e">Abort Compilation</div><div class="a" style="left:16px;top:504px;width:144px;height:24px;border:1px solid #b2b2b2;border-radius:3px;background:linear-gradient(#f0f0f0 0,#dcdcdc 5px,#cbcbcb 7px,#c9c9c9 20px,#d6d6d6 100%)"></div><div class="a chk" style="left:16px;top:535px"></div><div class="a ui " style="left:32.2px;top:535px;letter-spacing:-0.05px;">Shorten compiler paths</div>
<div class="a" style="left:168px;top:464px;width:691px;height:153px;border:1px solid #b5cfe7;border-top-color:#3d7bad;background:#fff"></div><div class="a mono log" style="top:468px">Compilation results...</div><div class="a mono log" style="top:484px">--------</div><div class="a mono log" style="top:500px">- Errors: 0</div><div class="a mono log" style="top:516px">- Warnings: 0</div><div class="a mono log" style="top:532px">- Output Filename: D:\Code\Workshop\WS6\Untitled1.exe</div><div class="a mono log" style="top:548px">- Output Size: 1.06020450592041 MiB</div><div class="a mono log" style="top:564px">- Compilation Time: 8.80s</div>
<div class="a sb sbv" style="left:841px;top:466px;width:17px;height:133px"></div><div class="a thumb" style="left:841px;top:538px;width:15px;height:42px"></div><div class="a gl" style="left:845px;top:555px"></div><div class="a au" style="left:845px;top:473px"></div><div class="a ad" style="left:845px;top:588px"></div><div class="a sb" style="left:170px;top:599px;width:688px;height:16px"></div><div class="a thumbh" style="left:188px;top:599px;width:99px;height:15px"></div><div class="a glh" style="left:233px;top:603px"></div><div class="a al" style="left:176px;top:602px"></div><div class="a ar" style="left:829px;top:602px"></div>
<div class="a" style="left:8px;top:621px;width:855px;height:20px;background:#f1eded;border-top:1px solid #a0a0a0;box-shadow:inset 1px 1px 0 #fff,inset -1px -1px 0 #fff"></div><div class="a ui st" style="left:9.8px;top:625px;letter-spacing:-0.1px;">Line:</div><div class="a ui st" style="left:49.5px;top:625px;letter-spacing:0.0px;">9</div><div class="a ui st" style="left:101.6px;top:625px;letter-spacing:-0.25px;">Col:</div><div class="a ui st" style="left:137.1px;top:625px;letter-spacing:0.0px;">2</div><div class="a ui st" style="left:188.5px;top:625px;letter-spacing:-0.55px;">Sel:</div><div class="a ui st" style="left:220.4px;top:625px;letter-spacing:0.0px;">0</div><div class="a ui st" style="left:271.8px;top:625px;letter-spacing:-0.3px;">Lines:</div><div class="a ui st" style="left:312.7px;top:625px;letter-spacing:-0.55px;">17</div><div class="a ui st" style="left:371.1px;top:625px;letter-spacing:0.0px;">Length:</div><div class="a ui st" style="left:419.9px;top:625px;letter-spacing:-0.55px;">335</div><div class="a ui st" style="left:491.4px;top:625px;letter-spacing:-0.2px;">Insert</div><div class="a ui st" style="left:572.2px;top:625px;letter-spacing:-0.25px;">Done parsing in 9.173 seconds</div><div class="a" style="left:487px;top:624px;width:1px;height:16px;background:#d8d4d4"></div><div class="a" style="left:567px;top:624px;width:1px;height:16px;background:#d8d4d4"></div><div class="a szgrip" style="left:853px;top:631px"></div>
<div class="a" style="left:7px;top:29px;width:857px;height:613px;border:1px solid #707070;border-radius:1px;pointer-events:none"></div>
</div>
<svg class="a winborder" width="871" height="649" viewBox="0 0 871 649"><rect x="0.5" y="0.5" width="870" height="648" rx="6.5" ry="6.5" fill="none" stroke="#1c1c1c" stroke-width="1.5"/><rect x="1.5" y="1.5" width="868" height="646" rx="5.5" ry="5.5" fill="none" stroke="#fff" stroke-width="1"/></svg>
</body></html>
